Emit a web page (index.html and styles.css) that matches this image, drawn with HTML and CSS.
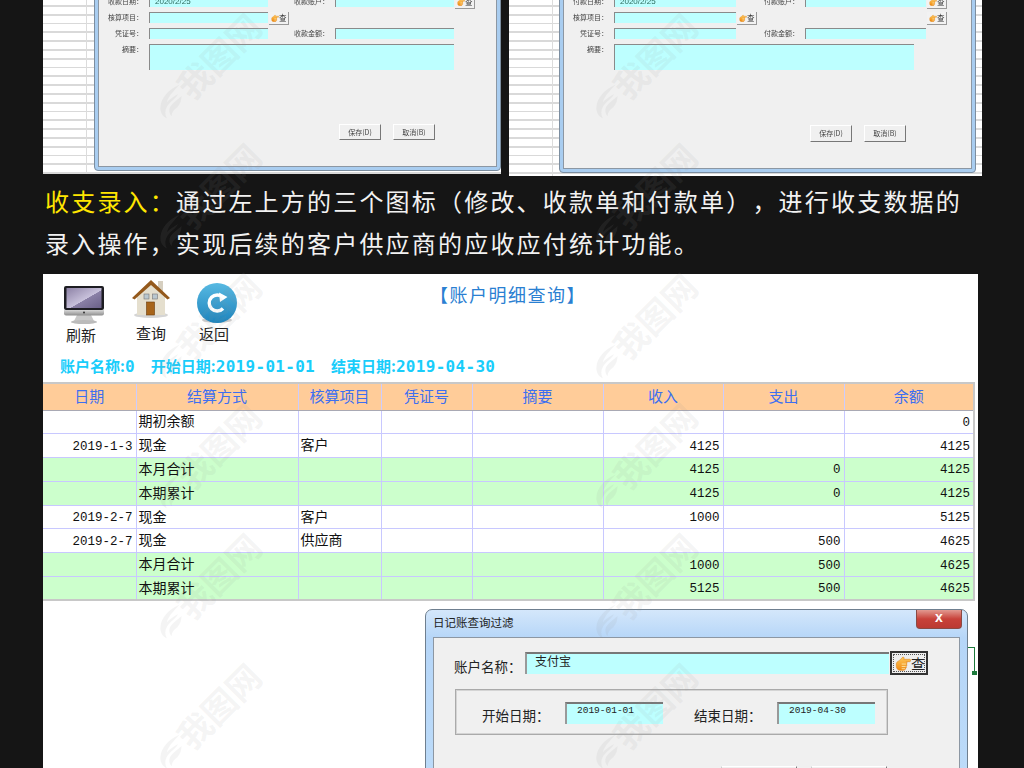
FILE: index.html
```html
<!DOCTYPE html>
<html lang="zh">
<head>
<meta charset="utf-8">
<title>收支录入</title>
<link rel="stylesheet" href="styles.css">
</head>
<body>
<svg class="defs" width="0" height="0" aria-hidden="true">
  <defs>
    <linearGradient id="handfill" x1="0" y1="0" x2="0" y2="1"><stop offset="0" stop-color="#ffc95a"/><stop offset="1" stop-color="#ef8a14"/></linearGradient>
    <symbol id="hand" viewBox="0 0 12 12">
      <path d="M1 6.500C1 5 3 4.500 4 3.500L5.500 1.800C6 1.200 7 1.600 6.800 2.600L6.600 3.200H11C12 3.200 12 5 11 5H8.500C9.200 5.300 9.200 6.600 8.500 6.800 9.100 7.200 9 8.300 8.300 8.500 8.700 9 8.500 10 7.800 10.200 7.800 11 7.300 11.500 6.500 11.500H4C2 11.500 1 10 1 8.500z" fill="url(#handfill)" stroke="#d9790f" stroke-width=".4"/>
      <path d="M5 6.800H8.200M5 8.600H8M5 10.300H7.500" fill="none" stroke="#fff0b8" stroke-width=".6"/>
    </symbol>
    <symbol id="flame" viewBox="0 0 40 50">
      <path d="M30 1C14 8 4 20 3 32c-1 8 3 14 9 17-3-6-3-12 1-18C17 24 25 21 28 14 22 18 16 21 12 26 15 16 23 9 30 1z" fill="currentColor"/>
      <path d="M33 17C26 24 18 28 16 35c-1 4 0 8 3 11 0-6 3-9 8-13 4-4 6-10 6-16z" fill="currentColor"/>
    </symbol>
  </defs>
</svg>

<main class="page">
  <section class="shots">
    <div class="shot shot-left">
      <div class="window window-left">
        <div class="form form-left">
          <div class="form-grid">
            <span class="lbl">收款日期&#xFF1A;</span><span class="fld"><i>2020/2/25</i></span><span></span>
            <span class="lbl">收款账户&#xFF1A;</span><span class="fld"></span><span class="look"><svg class="hand"><use href="#hand"/></svg>查</span>
            <span class="lbl">核算项目&#xFF1A;</span><span class="fld"></span><span class="look"><svg class="hand"><use href="#hand"/></svg>查</span>
            <span></span><span></span><span></span>
            <span class="lbl">凭证号&#xFF1A;</span><span class="fld"></span><span></span>
            <span class="lbl">收款金额&#xFF1A;</span><span class="fld"></span><span></span>
            <span class="lbl lbl-top">摘要&#xFF1A;</span><span class="fld memo memo-left"></span>
          </div>
          <div class="actions actions-left">
            <span class="btn">保存(D)</span><span class="btn">取消(B)</span>
          </div>
        </div>
      </div>
    </div>
    <div class="shot shot-right">
      <div class="window window-right">
        <div class="form form-right">
          <div class="form-grid">
            <span class="lbl">付款日期&#xFF1A;</span><span class="fld"><i>2020/2/25</i></span><span></span>
            <span class="lbl">付款账户&#xFF1A;</span><span class="fld"></span><span class="look"><svg class="hand"><use href="#hand"/></svg>查</span>
            <span class="lbl">核算项目&#xFF1A;</span><span class="fld"></span><span class="look"><svg class="hand"><use href="#hand"/></svg>查</span>
            <span></span><span></span><span class="look"><svg class="hand"><use href="#hand"/></svg>查</span>
            <span class="lbl">凭证号&#xFF1A;</span><span class="fld"></span><span></span>
            <span class="lbl">付款金额&#xFF1A;</span><span class="fld"></span><span></span>
            <span class="lbl lbl-top">摘要&#xFF1A;</span><span class="fld memo memo-right"></span>
          </div>
          <div class="actions actions-right">
            <span class="btn">保存(D)</span><span class="btn">取消(B)</span>
          </div>
        </div>
      </div>
    </div>
  </section>

  <section class="copy">
    <p><strong>收支录入&#xFF1A;</strong>通过左上方的三个图标&#xFF08;修改、收款单和付款单&#xFF09;&#xFF0C;进行收支数据的</p>
    <p>录入操作&#xFF0C;实现后续的客户供应商的应收应付统计功能。</p>
  </section>

  <section class="panel">
    <div class="top">
      <div class="tool tool-refresh">
        <svg width="42" height="40" viewBox="0 0 42 40">
          <defs>
            <linearGradient id="scr" x1="0" y1="0" x2="1" y2="1"><stop offset="0" stop-color="#8d82a6"/><stop offset=".55" stop-color="#c9c2dc"/><stop offset=".56" stop-color="#8a80a6"/><stop offset="1" stop-color="#6a6088"/></linearGradient>
            <linearGradient id="chin" x1="0" y1="0" x2="0" y2="1"><stop offset="0" stop-color="#d8d8d8"/><stop offset="1" stop-color="#8e8e8e"/></linearGradient>
          </defs>
          <path d="M14 30h14l3 6H11z" fill="#c9c9c9"/>
          <ellipse cx="21" cy="37" rx="13" ry="2" fill="#bbb"/>
          <rect x="1" y="1" width="40" height="24" rx="2" fill="#1d1d22"/>
          <rect x="3.500" y="3" width="35" height="20" fill="url(#scr)"/>
          <path d="M1 25h40v3.500a2 2 0 0 1-2 2H3a2 2 0 0 1-2-2z" fill="url(#chin)"/>
          <circle cx="21" cy="27.500" r="1" fill="#333"/>
        </svg>
        <span>刷新</span>
      </div>
      <div class="tool tool-query">
        <svg width="40" height="41" viewBox="0 0 40 41">
          <ellipse cx="20" cy="37" rx="17" ry="3" fill="#d5d5d5"/>
          <rect x="27" y="3" width="5" height="11" fill="#d6cfc0"/>
          <path d="M6 17 20 5l14 12v20H6z" fill="#e5dfce"/>
          <path d="M1 20 20 2l19 18-2.500 1.500L20 7 3.500 21.500z" fill="#94591c"/>
          <rect x="15.500" y="24" width="8" height="13" fill="#a7641a" stroke="#6c3d0c" stroke-width=".6"/>
          <rect x="13" y="16" width="5" height="5" fill="#b9c7cf" stroke="#777" stroke-width=".6"/>
          <rect x="21.500" y="16" width="5" height="5" fill="#b9c7cf" stroke="#777" stroke-width=".6"/>
        </svg>
        <span>查询</span>
      </div>
      <div class="tool tool-back">
        <svg width="42" height="41" viewBox="0 0 42 41">
          <defs>
            <linearGradient id="ball" x1="0" y1="0" x2="0" y2="1"><stop offset="0" stop-color="#58b9e2"/><stop offset="1" stop-color="#1d84bd"/></linearGradient>
          </defs>
          <ellipse cx="21" cy="37" rx="15" ry="3" fill="#cfcfcf"/>
          <circle cx="21" cy="20" r="20" fill="url(#ball)"/>
          <path d="M27 14.500a8 8 0 1 0 0 11" fill="none" stroke="#fff" stroke-width="3.400"/>
          <path d="M23 9.500 31.500 14l-7.500 5z" fill="#fff"/>
        </svg>
        <span>返回</span>
      </div>
      <h1 class="title">【账户明细查询】</h1>
    </div>
    <div class="info">
      <span class="info-a">账户名称:<b>0</b></span>
      <span class="info-b">开始日期:<b>2019-01-01</b></span>
      <span class="info-c">结束日期:<b>2019-04-30</b></span>
    </div>

    <table class="ledger">
      <colgroup>
        <col class="c1"><col class="c2"><col class="c3"><col class="c4"><col class="c5"><col class="c6"><col class="c7"><col class="c8">
      </colgroup>
      <thead>
        <tr><th>日期</th><th>结算方式</th><th>核算项目</th><th>凭证号</th><th>摘要</th><th>收入</th><th>支出</th><th>余额</th></tr>
      </thead>
      <tbody>
        <tr><td></td><td>期初余额</td><td></td><td></td><td></td><td></td><td></td><td class="n">0</td></tr>
        <tr><td class="n">2019-1-3</td><td>现金</td><td>客户</td><td></td><td></td><td class="n">4125</td><td></td><td class="n">4125</td></tr>
        <tr class="sum"><td></td><td>本月合计</td><td></td><td></td><td></td><td class="n">4125</td><td class="n">0</td><td class="n">4125</td></tr>
        <tr class="sum"><td></td><td>本期累计</td><td></td><td></td><td></td><td class="n">4125</td><td class="n">0</td><td class="n">4125</td></tr>
        <tr><td class="n">2019-2-7</td><td>现金</td><td>客户</td><td></td><td></td><td class="n">1000</td><td></td><td class="n">5125</td></tr>
        <tr><td class="n">2019-2-7</td><td>现金</td><td>供应商</td><td></td><td></td><td></td><td class="n">500</td><td class="n">4625</td></tr>
        <tr class="sum"><td></td><td>本月合计</td><td></td><td></td><td></td><td class="n">1000</td><td class="n">500</td><td class="n">4625</td></tr>
        <tr class="sum"><td></td><td>本期累计</td><td></td><td></td><td></td><td class="n">5125</td><td class="n">500</td><td class="n">4625</td></tr>
      </tbody>
    </table>

    <div class="link-mark"></div>

    <div class="filter">
      <div class="filter-bar">
        <span>日记账查询过滤</span>
        <span class="close">x</span>
      </div>
      <div class="filter-body">
        <div class="acct">
          <span class="acct-lbl">账户名称&#xFF1A;</span>
          <span class="acct-fld">支付宝</span>
          <span class="acct-btn"><svg class="hand-lg"><use href="#hand"/></svg>查</span>
        </div>
        <div class="range">
          <span class="range-lbl">开始日期&#xFF1A;</span>
          <span class="range-fld">2019-01-01</span>
          <span class="range-lbl range-lbl-2">结束日期&#xFF1A;</span>
          <span class="range-fld">2019-04-30</span>
        </div>
        <div class="filter-actions"><span class="btn-lg"></span><span class="btn-lg"></span></div>
      </div>
    </div>
  </section>

  <div class="wm-layer">
    <div class="wm"><svg class="wm-logo"><use href="#flame"/></svg>我图网</div>
    <div class="wm"><svg class="wm-logo"><use href="#flame"/></svg>我图网</div>
    <div class="wm"><svg class="wm-logo"><use href="#flame"/></svg>我图网</div>
    <div class="wm"><svg class="wm-logo"><use href="#flame"/></svg>我图网</div>
    <div class="wm"><svg class="wm-logo"><use href="#flame"/></svg>我图网</div>
    <div class="wm"><svg class="wm-logo"><use href="#flame"/></svg>我图网</div>
    <div class="wm"><svg class="wm-logo"><use href="#flame"/></svg>我图网</div>
    <div class="wm"><svg class="wm-logo"><use href="#flame"/></svg>我图网</div>
    <div class="wm"><svg class="wm-logo"><use href="#flame"/></svg>我图网</div>
    <div class="wm"><svg class="wm-logo"><use href="#flame"/></svg>我图网</div>
    <div class="wm"><svg class="wm-logo"><use href="#flame"/></svg>我图网</div>
    <div class="wm"><svg class="wm-logo"><use href="#flame"/></svg>我图网</div>
  </div>
</main>
</body>
</html>
```
FILE: styles.css
```css
* { box-sizing: border-box; }
html, body { margin: 0; padding: 0; background: #151515; }
.defs { position: absolute; }
.page {
  position: relative;
  width: 1024px;
  height: 768px;
  overflow: hidden;
  background: #151515;
  font-family: "Noto Sans CJK SC", "Liberation Sans", sans-serif;
  text-spacing-trim: space-all;
}

/* top screenshots */
.shots { display: flex; gap: 8px; padding-left: 43px; height: 176px; align-items: flex-start; }
.shot {
  position: relative;
  overflow: hidden;
  background-color: #fff;
  background-image:
    linear-gradient(90deg, transparent 43px, #dcdcdc 43px, #dcdcdc 44px, transparent 44px),
    repeating-linear-gradient(180deg, #fff 0, #fff 5px, #d9d9d9 5px, #d9d9d9 6.800px, #fff 6.800px, #fff 8.800px);
  filter: blur(.35px);
}
.shot-left { width: 458px; height: 174px; }
.shot-right { width: 473px; height: 176px; }
.window {
  position: absolute;
  top: -20px;
  border: 1px solid #7c8ea0;
  border-radius: 4px;
  background: #a9cdf0;
  padding: 3px;
}
.window-left { left: 51px; width: 407px; height: 191px; }
.window-right { left: 50px; width: 417px; height: 193px; }
.form { height: 100%; background: #f0f0f0; border: 1px solid #8c97a3; padding-top: 11px; }
.form-grid { display: grid; grid-auto-rows: 11px; row-gap: 5px; }
.form-left .form-grid { grid-template-columns: 50px 119px 21px 46px 119px 21px; }
.form-right .form-grid { grid-template-columns: 50px 122px 22px 47px 121px 22px; }
.lbl {
  font-size: 7px;
  line-height: 11px;
  color: #444;
  text-align: right;
  padding-right: 6px;
  white-space: nowrap;
}
.lbl-top { grid-row-end: span 2; }
.fld {
  display: block;
  height: 11px;
  background: #bdffff;
  border-top: 1px solid #8a8a8a;
  border-left: 1px solid #8a8a8a;
  overflow: hidden;
}
.fld i { display: block; font: normal 8px/9px "Liberation Sans", sans-serif; color: #2c6a5c; padding-left: 5px; }
.memo { grid-row-end: span 2; height: 26px; }
.memo-left { grid-column: 2 / span 4; }
.memo-right { grid-column: 2 / span 4; width: 300px; }
.look {
  display: flex;
  align-items: center;
  width: 20px;
  height: 13px;
  margin-left: 1px;
  background: #f2f2f2;
  border-right: 1px solid #999;
  border-bottom: 1px solid #999;
  font-size: 7.500px;
  line-height: 12px;
  color: #333;
}
.hand { width: 8px; height: 8px; flex: none; margin: 0 0 0 2px; }
.actions { display: flex; gap: 12px; justify-content: flex-end; }
.actions-left { margin-top: 53px; padding-right: 61px; }
.actions-right { margin-top: 54px; padding-right: 65px; }
.btn {
  width: 42px;
  height: 16px;
  text-align: center;
  font-size: 7px;
  line-height: 15px;
  color: #444;
  background: #f0f0f0;
  border-right: 1px solid #777;
  border-bottom: 1px solid #777;
  border-top: 1px solid #fff;
  border-left: 1px solid #fff;
}
.actions-right .btn { height: 17px; }

/* copy */
.copy { padding: 4px 0 0 45px; height: 98px; }
.copy p {
  margin: 0;
  font-size: 24px;
  line-height: 42px;
  letter-spacing: 2.200px;
  color: #f2f2f2;
  white-space: nowrap;
}
.copy strong { font-weight: 400; color: #ffe600; }

/* panel */
.panel {
  position: relative;
  width: 935px;
  height: 494px;
  margin-left: 43px;
  background: #fff;
}
.top { position: relative; display: flex; height: 71px; }
.tool { display: flex; flex-direction: column; align-items: center; font-size: 15px; line-height: 18px; color: #222; }
.tool svg { display: block; flex: none; }
.tool span { white-space: nowrap; }
.tool-refresh { width: 42px; margin: 11px 0 0 20px; }
.tool-refresh span { margin: 1px 6px 0 0; }
.tool-query { width: 40px; margin: 4px 0 0 26px; }
.tool-query span { margin-top: 5px; }
.tool-back { width: 42px; margin: 9px 0 0 25px; }
.tool-back span { margin: 1px 6px 0 0; }
.title {
  margin: 7px 0 0 192px;
  font-size: 18px;
  font-weight: 400;
  line-height: 26px;
  letter-spacing: 1.500px;
  color: #2a80d2;
  white-space: nowrap;
}
.info {
  display: flex;
  height: 37px;
  padding: 10px 0 0 17px;
  font-size: 15px;
  line-height: 22px;
  font-weight: 700;
  color: #19cdfb;
  white-space: nowrap;
}
.info b { font-family: "DejaVu Sans Mono", monospace; font-size: 16px; letter-spacing: .3px; }
.info-b { margin-left: 16px; }
.info-c { margin-left: 16px; }

.ledger {
  table-layout: fixed;
  width: 931px;
  border-collapse: collapse;
  border-top: 2px solid #c8c8c8;
  border-bottom: 2px solid #c8c8c8;
  border-right: 2px solid #c8c8c8;
  font-size: 14px;
  color: #111;
}
.c1 { width: 93px; } .c2 { width: 162px; } .c3 { width: 83px; } .c4 { width: 91px; }
.c5 { width: 131px; } .c6 { width: 120px; } .c7 { width: 121px; } .c8 { width: 130px; }
.ledger th {
  height: 27px;
  padding: 0 0 3px;
  background: #ffcc99;
  border-right: 1px solid #ccccff;
  border-bottom: 1px solid #a9a9b4;
  font-weight: 400;
  font-size: 15px;
  color: #3d6ff0;
}
.ledger td {
  height: 23.800px;
  padding: 0 3px 3px 2px;
  border-right: 1px solid #c8c8ff;
  border-bottom: 1px solid #c8c8ff;
  line-height: 18px;
  white-space: nowrap;
}
.ledger .sum td { background: #ccffcc; }
.ledger td.n { padding: 2px 3px 0 2px; text-align: right; font-family: "Liberation Mono", monospace; font-size: 12.500px; }

.link-mark {
  position: absolute;
  left: 924px;
  top: 373px;
  width: 8px;
  height: 26px;
  border-top: 1px solid #1d7a3c;
  border-right: 1px solid #1d7a3c;
}
.link-mark::after {
  content: "";
  position: absolute;
  right: -3px;
  bottom: -2px;
  width: 5px;
  height: 4px;
  background: #1d7a3c;
}

/* lower dialog */
.filter {
  position: absolute;
  left: 382px;
  top: 335px;
  width: 543px;
  height: 170px;
  padding: 0 7px;
  border: 1px solid #6f7f8f;
  border-radius: 7px 7px 0 0;
  background: linear-gradient(180deg, #d4e7fb 0, #b6d6f8 28px, #bcdbf9 100%);
}
.filter-bar {
  display: flex;
  justify-content: space-between;
  height: 27px;
  font-size: 11.500px;
  line-height: 24px;
  color: #222;
}
.close {
  width: 46px;
  height: 19px;
  margin-right: -2px;
  border: 1px solid #8a4a44;
  border-top: 0;
  border-radius: 0 0 4px 4px;
  background: linear-gradient(180deg, #e29a90 0, #c8423a 50%, #bb3a33 100%);
  color: #fff;
  font: 700 14px/15px "Liberation Sans", sans-serif;
  text-align: center;
}
.filter-body {
  height: 140px;
  background: #f0f0f0;
  border: 1px solid #8c97a3;
  padding: 14px 0 0 20px;
}
.acct { display: flex; align-items: flex-start; height: 24px; }
.acct-lbl { width: 71px; font-size: 13.500px; line-height: 20px; margin-top: 4px; color: #222; white-space: nowrap; }
.acct-fld {
  width: 364px;
  height: 22px;
  background: #bdffff;
  border-top: 2px solid #777;
  border-left: 2px solid #999;
  padding-left: 8px;
  font-size: 12px;
  line-height: 14px;
  color: #222;
}
.acct-btn {
  position: relative;
  display: flex;
  align-items: center;
  width: 38px;
  height: 24px;
  margin: -1px 0 0 1px;
  padding-left: 3px;
  background: #eee;
  border: 2px solid #333;
  font-size: 14px;
  line-height: 18px;
  color: #222;
}
.acct-btn::after {
  content: "";
  position: absolute;
  inset: 1px;
  border: 1px dotted #555;
}
.hand-lg { width: 16px; height: 16px; flex: none; }
.range {
  display: flex;
  width: 433px;
  height: 46px;
  margin: 13px 0 0 1px;
  padding: 12px 0 0 26px;
  border: 1px solid #aaa;
  box-shadow: inset 0 0 0 1px #d4d4d4;
}
.range-lbl { width: 83px; font-size: 13.500px; line-height: 20px; margin-top: 3px; color: #222; white-space: nowrap; }
.range-lbl-2 { margin-left: 31px; }
.range-fld {
  width: 98px;
  height: 22px;
  background: #bdffff;
  border-top: 2px solid #777;
  border-left: 2px solid #999;
  padding-left: 10px;
  font: 9.500px/14px "Liberation Mono", monospace;
  color: #222;
}
.filter-actions { display: flex; gap: 14px; justify-content: flex-end; padding-right: 72px; margin-top: 31px; }
.btn-lg { width: 76px; height: 22px; background: #f0f0f0; border-top: 1px solid #fff; border-right: 1px solid #777; border-left: 1px solid #ccc; }

/* watermark */
.wm-layer {
  position: absolute;
  inset: 0;
  display: grid;
  grid-template-columns: 140px 140px;
  grid-auto-rows: 50px;
  column-gap: 296px;
  row-gap: 80px;
  padding: 37px 0 0 142px;
  pointer-events: none;
}
.wm {
  display: flex;
  align-items: center;
  transform: rotate(-45deg);
  font-size: 34px;
  line-height: 50px;
  font-weight: 700;
  color: rgba(150, 150, 150, .1);
  white-space: nowrap;
}
.wm-logo { width: 28px; height: 38px; flex: none; transform: rotate(45deg); }
```
